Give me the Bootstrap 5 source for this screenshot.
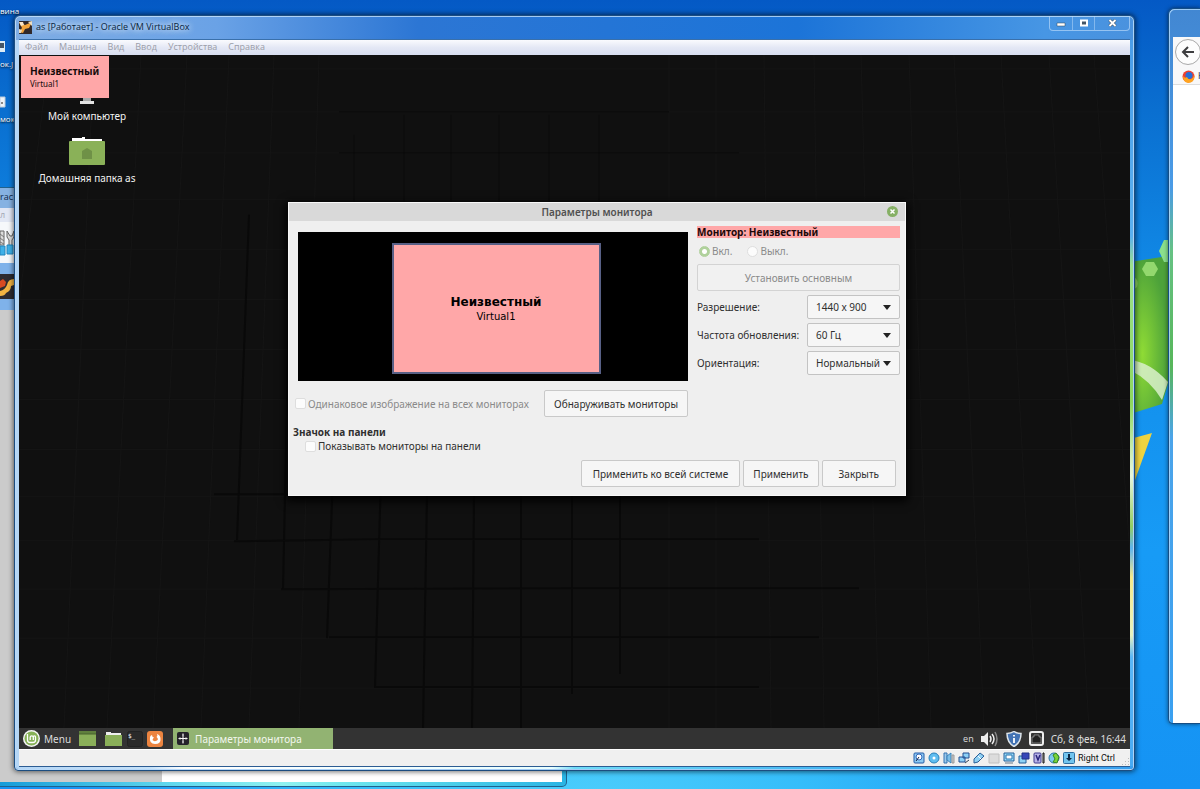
<!DOCTYPE html>
<html lang="ru">
<head>
<meta charset="utf-8">
<meta name="viewport" content="width=device-width, initial-scale=1">
<title>as [Работает] - Oracle VM VirtualBox</title>
<link rel="stylesheet" href="https://cdn.jsdelivr.net/npm/bootstrap@5.3.0/dist/css/bootstrap.min.css">
<style>
body{font-family:"Noto Sans",sans-serif;font-size:10px;line-height:14px;color:#303030;background:#1593f0}
.host{min-height:100vh;background:radial-gradient(ellipse 520px 300px at 48% 104%,#4fd0fc,#35bdfa 45%,transparent),linear-gradient(180deg,#0459c5 0,#0a6fd0 14%,#118be8 36%,#179bf6 70%,#1593f4 100%)}
.segoe{font-family:"Open Sans",sans-serif;font-size:9px}
.hosticon{left:0;color:#fff;font-size:8px;text-shadow:0 1px 2px #000;white-space:nowrap}
.vm{left:14px;right:65px;top:15px;bottom:18px;padding:0 4px 3px 4px;border:1px solid #1c4d80;border-radius:6px 6px 4px 4px;background:linear-gradient(90deg,#7fade4 0,#6aa2e6 18%,#2c76d4 36%,#1c74d8 70%,#4796e4 92%,#4a92de);box-shadow:0 0 5px 1px rgba(0,0,0,.55),inset 0 0 0 1px rgba(205,232,255,.75);z-index:3}
.vm-glass{left:1px;right:1px;top:24px;bottom:1px;border-radius:0 0 3px 3px;background:linear-gradient(90deg,#b4d6f6 0,#c6e2f9 12%,#fff 15%,#e9ffff 48%,#6fdcf8 50%,#3fb2f2 75%,#38a0ef)}
.vm-right{right:1px;width:3px;top:24px;bottom:4px;background:linear-gradient(180deg,#4a9de8 0,#5ab0ef 27%,#9be08d 31%,#8dd75d 50%,#e8f6dd 60%,#93cd62 67%,#5fb4ee 70%,#f6e98a 74%,#e7f2c0 82%,#5ab6f6 85%,#48aaf3)}
.vm-title{height:23px}
.vm-title h1{font-size:9px;line-height:14px;font-weight:400;color:#071f3c;text-shadow:0 0 6px #fff,0 0 6px #cfe4fa}
.caption{border:1px solid rgba(190,220,250,.65);border-top:0;border-radius:0 0 4px 4px;height:15px}
.caption button{border:0;background:none;padding:0;height:14px;width:22px;display:flex;align-items:center;justify-content:center}
.caption button+button{border-left:1px solid rgba(190,220,250,.5)}
.caption button:last-child{width:35px}
.menu{height:16px;background:linear-gradient(#fafbfe,#e4e8f5 50%,#d8def0);padding-left:6px;gap:11px;border-top:1px solid #3a70ab}
.menu a{color:#9a9da8;text-decoration:none;font-size:9px;line-height:14px}
.client{border-bottom:1px solid #2c5c93}
.guest{background:#101010;overflow:hidden}
.grid-art{inset:0;width:100%;height:100%}
.osd{left:2px;top:1px;width:88px;height:42px;padding:9px 9px;background:#ffa7a8;color:#140a0a;font-size:8px;line-height:11px;z-index:2}
.osd strong{display:block;font-size:10px;line-height:13px}
.desk{left:20px;top:41px;width:96px;color:#f2f2f2;text-align:center;white-space:nowrap}
.desk-folder{margin:10px 0 4px}
.dialog-win{left:269px;top:147px;width:618px;background:#efefef;border:1px solid #f8f8f8;box-shadow:0 3px 9px 2px #000}
.dialog-head{height:18px;background:#d9d9d9}
.dialog-head h2{font-size:10px;line-height:18px;font-weight:600;color:#505050}
.close-dot{right:7px;top:3px;width:11px;height:11px;border:0;padding:0;background:none;display:flex}
.dialog-body{padding:5px 5px 0 6px;gap:9px;white-space:nowrap}
.preview{height:149px;background:#000;margin:6px 0 9px 3px}
.screen{width:209px;height:131px;border:2px solid #586086;background:#ffa7a8;color:#000;font-family:"DejaVu Sans",sans-serif;font-size:10px;line-height:13px;margin:4px 0 0 6px}
.screen strong{font-size:12px;line-height:15px}
.mbtn{border:1px solid #c9c9c9;border-radius:2px;background:#f6f6f6;color:#303030;line-height:14px;height:27px;padding:0 9px;white-space:nowrap}
.mbtn-wide{padding:0 11px}
.mbtn-close{padding:0 16px}
.mbtn:disabled{background:#f1f1f1;color:#8a8a8a;opacity:1;border-color:#d3d3d3}
.msel{border:1px solid #c3c3c3;border-radius:2px;height:24px;width:93px;padding:0 8px;color:#303030;appearance:none;background:#f6f6f6 url("data:image/svg+xml,%3Csvg xmlns='http://www.w3.org/2000/svg' viewBox='0 0 8 5'%3E%3Cpath d='M0 0h8L4 5z' fill='%23222'/%3E%3C/svg%3E") no-repeat right 8px center/8px 5px}
.mon-name{background:#ffa7a8;color:#1a0808;line-height:12px;font-weight:700}
.radios{height:26px;gap:15px;padding-left:2px}
.opt{display:flex;align-items:center;gap:2px}
.tick{appearance:none;width:11px;height:11px;margin:0;border:1px solid #dedede;border-radius:2px;background:#fcfcfc;flex:none}
.tick[type=radio]{border-radius:50%}
.tick[type=radio]:checked{background:radial-gradient(#fff 0 2px,#b0d19c 3px);border-color:#b0d19c}
.dim{color:#8a8a8a}
.right-col{flex:0 0 203px}
.dialog-foot{gap:3px;padding:7px 9px 8px 0}
.taskbar{height:21px;background:#333;color:#ddd}
.taskbar button{background:none;border:0;padding:0;color:inherit;line-height:14px;display:flex;align-items:center}
.taskbar .task{background:#92b372;color:#f3f7ee;width:160px;height:21px;padding-left:4px;gap:6px;margin-left:10px}
.tray{gap:7px;padding-right:4px}
.status{height:17px;background:#f0f0f0;color:#111;font-family:Roboto,sans-serif;font-size:9px;gap:3px;border-top:1px solid #fff}
.back{left:0;width:567px;top:187px;bottom:2px;border:1px solid #21618c;border-left:0;border-radius:0 5px 5px 0;background:linear-gradient(90deg,#169cd8,#5fd8ee 30%,#8ff2f0 50%,#70e8ee 60%,#28b4e4 100%);padding:0 4px 4px 0;z-index:1;overflow:hidden}
.back-title{height:20px;background:#86b2e2;color:#10294a;line-height:17px}
.back-menu{height:14px;background:#e2e7f4;color:#a4a8b4}
.back-tool{height:41px;background:#f6f8fb}
.back-item{height:47px;background:#7fb2ea}
.pane-gray{width:162px;background:#cbcbcb}
.browser{right:0;width:32px;top:8px;height:calc(100% - 73px);border:1px solid #154e85;border-right:0;border-radius:6px 0 0 5px;background:linear-gradient(180deg,#4287d2,#4a9be6 25%,#66c283 34%,#57b65a 50%,#4ba4ea 60%,#3aa0f0);box-shadow:0 0 4px rgba(0,0,0,.55),inset 1px 1px 0 rgba(180,220,255,.8);padding:28px 0 4px 4px;z-index:2;overflow:hidden}
.browser-bar{height:48px;background:#f8f8f9;border-bottom:1px solid #ddd;overflow:hidden;padding:2px 0 0 2px}
.back-btn{width:26px;height:26px;border:1px solid #a8a8a8;border-radius:50%;background:#fdfdfd;padding:0;display:flex;align-items:center;justify-content:center;flex:none}
.bookmark{padding-left:7px;gap:3px}
.flag{right:0;top:230px;width:70px;height:310px}
svg{flex:none}
</style>
</head>
<body>
<div class="host position-relative overflow-hidden">

<svg class="flag position-absolute" viewBox="0 0 70 310">
<defs><radialGradient id="gr" cx=".3" cy=".62" r=".6"><stop offset="0" stop-color="#8fdb35"/><stop offset="1" stop-color="#4da23a"/></radialGradient></defs>
<path d="M0 32 L38 26 L42 30 V140 L32 174 L0 184Z" fill="url(#gr)"/>
<path d="M0 130Q20 132 38 152L32 170Q20 150 0 140Z" fill="#d9f0cb" opacity=".85"/>
<path d="M16 30l4-7h8l4 7-4 7h-8z" fill="#93d86e" transform="translate(-4 9)"/>
<path d="M29 21l5-11h8v22h-8z" fill="#8be08c"/>
<path d="M0 209L22 203L0 264Z" fill="#efd33f"/><path d="M4 47q5 3 3 10l-4 3z" fill="#8ad05f"/>
</svg>

<div class="segoe">
<span class="hosticon position-absolute" style="top:4px">вина</span>
<span class="hosticon position-absolute" style="top:57px">ок.J</span>
<span class="hosticon position-absolute" style="top:112px">мок</span>
<svg class="position-absolute start-0" style="top:40px" width="6" height="13"><path d="M0 1h5v11H0z" fill="#dcecf5"/><path d="M0 3h4v5H0z" fill="#456"/></svg>
<svg class="position-absolute start-0" style="top:96px" width="6" height="12"><path d="M0 1h5v10H0z" fill="#eef3f8" stroke="#bcd"/><path d="M1 6h2v2H1z" fill="#888"/></svg>
</div>

<section class="back position-absolute d-flex flex-column segoe">
<div class="back-title">rac</div>
<div class="back-menu">л</div>
<div class="back-tool"><svg width="15" height="38" viewBox="0 0 15 38"><path d="M0 9h4v14H0zM7 9l3 5h2l2-5v6l-2 3v6h-3v-6l-2-3z" fill="#ddd" stroke="#666"/><path d="M0 12l4 3M0 16l4 3M0 20l4 2" stroke="#777"/><path d="M0 24h5v9H0zM7 23h6v9H7z" fill="#3eb0e8" stroke="#2385bd"/></svg></div>
<div class="back-item d-flex align-items-center"><svg width="15" height="25" viewBox="0 0 15 25"><path d="M0 0h15v25H0z" fill="#2e2c31"/><path d="M14 5Q8 5 7 11Q5 16 0 17v5q5 0 6-3 5-2 5-7l3-1z" fill="#f2b443"/><path d="M0 7l3-2 3 3-1 4-5 2z" fill="#d84b22"/></svg></div>
<div class="d-flex flex-fill bg-white"><div class="pane-gray"></div></div>
</section>

<section class="browser position-absolute" aria-label="Firefox">
<div class="browser-bar">
<button class="back-btn" aria-label="Назад"><svg width="14" height="12" viewBox="0 0 14 12" fill="none" stroke="#3e3e40" stroke-width="2"><path d="M13 6H2M7 1L2 6l5 5"/></svg></button>
<div class="bookmark d-flex align-items-center mt-1 segoe text-dark"><svg width="13" height="13" viewBox="0 0 13 13"><circle cx="6.500" cy="6.500" r="6" fill="#ee3f31"/><circle cx="7" cy="5.500" r="3.500" fill="#276ed6"/><path d="M12 4q2 8-6 9-5-1-5-7 2 3 4 1 1 3 4 2 3-1 3-5z" fill="#ffa420"/></svg>Н</div>
</div>
<div class="bg-white h-100"></div>
</section>

<main class="vm position-absolute d-flex flex-column">
<div class="vm-glass position-absolute"></div><div class="vm-right position-absolute"></div>
<header class="vm-title d-flex align-items-start segoe position-relative">
<svg class="mt-1" width="13" height="14" viewBox="0 0 13 14"><path d="M0 1h13v13H0z" fill="#30282a"/><path d="M0 2l6 3 7-3-3 6-4 1-2 4-4-1 3-4z" fill="#f1a33b"/><path d="M0 2h4l1 3-3 1z" fill="#f7e5ca"/><path d="M9 2l4-1v5zM0 9l3 1-1 3H0z" fill="#eaddc4"/></svg>
<h1 class="mb-0 ms-1 mt-1">as [Работает] - Oracle VM VirtualBox</h1>
<div class="caption d-flex ms-auto">
<button aria-label="Свернуть"><svg width="10" height="8"><path d="M1 4h8v3H1z" fill="#fff" stroke="#345" stroke-width=".5"/></svg></button>
<button aria-label="Развернуть"><svg width="10" height="8"><path d="M2 1.500h6v5H2z" fill="#456" stroke="#fff" stroke-width="2"/></svg></button>
<button aria-label="Закрыть"><svg width="9" height="8"><path d="M1.500 1l6 6M7.500 1l-6 6" stroke="#345" stroke-width="3"/><path d="M1.500 1l6 6M7.500 1l-6 6" stroke="#fff" stroke-width="2"/></svg></button>
</div>
</header>
<div class="client d-flex flex-column flex-fill position-relative">
<nav class="menu d-flex segoe"><a href="#">Файл</a><a href="#">Машина</a><a href="#">Вид</a><a href="#">Ввод</a><a href="#">Устройства</a><a href="#">Справка</a></nav>

<div class="guest flex-fill position-relative">
<svg class="grid-art position-absolute" viewBox="0 0 1111 674" preserveAspectRatio="none" fill="none">
<g stroke="#151515"><path d="M30 0L0 250M75 0L45 674M122 0L88 674M168 0L134 674M210 0L182 674M255 0L230 674M300 0L280 674M650 0V674M697 0V674M745 0L752 674M795 0L805 674M842 0L860 674M890 0L912 674M935 0L965 674M982 0L1018 674M1030 0L1070 674M1075 0L1111 500"/><path d="M0 14H1111M0 57H1111M0 98H1111M0 145H1111M0 195H1111M0 245H1111M0 295H1111M0 345H1111M0 395H1111M0 442H1111M0 486H1111M0 535H1111M0 584H1111M0 634H1111"/></g>
<g stroke="#050505" stroke-width="2" opacity=".6"><path d="M230 160L218 486M272 160L264 535M314 420L308 584M362 420L356 634M408 440L404 674M455 440L453 674M502 440V674M553 440V640M601 440V620"/><path d="M215 487L360 485H740M262 535L560 534H840M310 583H800M356 633H740M195 440H269"/></g>
<g stroke="#0a0a0a"><path d="M335 80V147M385 60V147M432 60V147M480 60V147M530 60V147M580 60V147M320 98H720M320 57H650"/></g>
</svg>
<div class="osd position-absolute"><strong>Неизвестный</strong>Virtual1</div>
<div class="desk position-absolute d-flex flex-column align-items-center">
<svg width="16" height="9"><path d="M4 0h8v5H4z" fill="#aaa"/><path d="M1 5h14v3H1z" fill="#e4e4e4"/></svg>
<span class="mt-1">Мой компьютер</span>
<svg class="desk-folder" width="36" height="34" viewBox="0 0 36 34"><path d="M3 5h10V4h3v2h17v4H3z" fill="#fff"/><rect y="8" width="36" height="24" rx="1" fill="#8ab158"/><path d="M18 15l5 3v8H13v-8z" fill="#6f9147"/></svg>
<span>Домашняя папка as</span>
</div>

<section class="dialog-win position-absolute">
<header class="dialog-head position-relative text-center"><h2 class="mb-0">Параметры монитора</h2>
<button class="close-dot position-absolute" aria-label="Закрыть окно"><svg width="11" height="11" viewBox="0 0 11 11"><circle cx="5.500" cy="5.500" r="5.500" fill="#86b065"/><path d="M3.500 3.500l4 4m0-4l-4 4" stroke="#fff" stroke-width="1.500"/></svg></button></header>
<form class="dialog-body d-flex">
<div class="flex-fill">
<div class="preview d-flex align-items-center justify-content-center"><div class="screen d-flex flex-column align-items-center justify-content-center"><strong>Неизвестный</strong><span>Virtual1</span></div></div>
<div class="d-flex align-items-center justify-content-between"><label class="opt dim"><input class="tick" type="checkbox" disabled>Одинаковое изображение на всех мониторах</label><button type="button" class="mbtn">Обнаруживать мониторы</button></div>
</div>
<div class="right-col">
<div class="mon-name">Монитор: Неизвестный</div>
<div class="radios d-flex dim"><label class="opt"><input class="tick" type="radio" name="on" checked disabled>Вкл.</label><label class="opt"><input class="tick" type="radio" name="on" disabled>Выкл.</label></div>
<button type="button" class="mbtn w-100" disabled>Установить основным</button>
<div class="d-flex flex-column gap-1 mt-1">
<div class="d-flex align-items-center justify-content-between"><label for="res">Разрешение:</label><select id="res" class="msel"><option>1440 x 900</option></select></div>
<div class="d-flex align-items-center justify-content-between"><label for="hz">Частота обновления:</label><select id="hz" class="msel"><option>60 Гц</option></select></div>
<div class="d-flex align-items-center justify-content-between"><label for="rot">Ориентация:</label><select id="rot" class="msel"><option>Нормальный</option></select></div>
</div>
</div>
</form>
<div class="px-1 pt-2">
<strong class="d-block">Значок на панели</strong>
<label class="opt ps-2 ms-1"><input class="tick" type="checkbox">Показывать мониторы на панели</label>
</div>
<footer class="dialog-foot d-flex justify-content-end"><button class="mbtn mbtn-wide">Применить ко всей системе</button><button class="mbtn">Применить</button><button class="mbtn mbtn-close">Закрыть</button></footer>
</section>
</div>

<footer class="taskbar d-flex align-items-center">
<button class="ms-1 gap-1"><svg width="17" height="17" viewBox="0 0 17 17"><circle cx="8.500" cy="8.500" r="8.500" fill="#f5f5f5"/><circle cx="8.500" cy="8.500" r="7" fill="#87b158"/><path d="M4.500 4v6q0 2.500 2.500 2.500h3q2.500 0 2.500-2.500V7q0-1.200-1.100-1.200T10.300 7v3M10.300 7q0-1.200-1.500-1.200T7.200 7v3" fill="none" stroke="#fff" stroke-width="1.300"/></svg>Menu</button>
<button class="ms-2" aria-label="Рабочий стол"><svg width="17" height="15"><path d="M0 0h17v15H0z" fill="#8aaf59"/><path d="M0 0h17v3H0z" fill="#5f7f3d"/><path d="M0 3h17" stroke="#49632f"/></svg></button>
<button class="ms-2" aria-label="Файлы"><svg width="19" height="15"><path d="M2 3V1h5v1h10v3H2z" fill="#eee"/><path d="M1 4h17v11H1z" fill="#8aaf59"/></svg></button>
<button class="ms-1" aria-label="Терминал"><svg width="16" height="16"><rect x=".5" y=".5" width="15" height="15" rx="2" fill="#2a2a2a" stroke="#222"/><text x="1" y="7" font-family="DejaVu Sans Mono" font-size="6" fill="#fff">$_</text></svg></button>
<button class="ms-1" aria-label="Firefox"><svg width="16" height="16" viewBox="0 0 16 16"><rect width="16" height="16" rx="3" fill="#ed8440"/><path d="M3 6q-1 7 5 7t5.500-5q0-4-3.500-5 1 2-.5 3Q12 8 10 9.500 7 11 5.500 9 6 7 7 6.500 5 6 5 4 3.500 4.500 3 6z" fill="#fff"/></svg></button>
<button class="task"><svg width="12" height="13" viewBox="0 0 12 13"><rect width="12" height="13" rx="2" fill="#24222a"/><path d="M6 1.500v10M1.500 6.500h9" stroke="#fff"/><path d="M5 3h2M5 10h2M3 5v3M9 5v3" stroke="#ddd" stroke-width=".7"/></svg>Параметры монитора</button>
<div class="tray d-flex align-items-center ms-auto"><span class="segoe">en</span>
<svg width="18" height="16" viewBox="0 0 18 16" fill="none" stroke="#eee"><path d="M0 5h3l4-4v14l-4-4H0z" fill="#eee" stroke="none"/><path d="M9 5q2 3 0 6M11 3q4 5 0 10" stroke-width="1.500"/><path d="M14 1q4 7 0 14" stroke="#888" stroke-width="1.500"/></svg>
<svg width="16" height="16" viewBox="0 0 16 16"><path d="M8 .5q3 2 7 2 0 9-7 13-7-4-7-13 4 0 7-2z" fill="#4373b4" stroke="#dde4ea" stroke-width="1.500"/><path d="M8 7v5M8 4v1.500" stroke="#fff" stroke-width="1.800"/></svg>
<svg width="15" height="15" viewBox="0 0 15 15"><rect x="1" y="1" width="13" height="13" rx="2" fill="#333" stroke="#eee" stroke-width="2"/><path d="M3 12V6h2V4h5v2h2v6z" fill="#222" stroke="#bbb" stroke-width=".6"/></svg>
<span>Сб, 8 фев, 16:44</span></div>
</footer>

<footer class="status d-flex align-items-center justify-content-end">
<svg width="12" height="12"><rect x="1" y="1" width="10" height="10" rx="1" fill="#8cc9f2" stroke="#245ca8"/><circle cx="6" cy="5" r="3" fill="#fff" stroke="#36b"/><path d="M6 5L3 9" stroke="#124"/></svg>
<svg width="12" height="12"><circle cx="6" cy="6" r="5" fill="#5fbdf0" stroke="#2880bb"/><circle cx="6" cy="6" r="1.500" fill="#fff"/></svg>
<svg width="12" height="12"><path d="M1 1h3v10H1z" fill="#9cc9ea" stroke="#3272b2"/><path d="M4 4l4-3v10l-4-3z" fill="#7cbfe8" stroke="#3a84bd"/><path d="M9 3h2v8H9z" fill="#ccc" stroke="#999"/></svg>
<svg width="12" height="12"><path d="M5 1h6v5H5zM1 5h6v5H1z" fill="#8dd0f6" stroke="#234f91"/><path d="M7 11l4-3" stroke="#345"/></svg>
<svg width="12" height="12"><path d="M1 11V7l6-6 4 3-6 6z" fill="#8fd0f3" stroke="#2b6098"/><path d="M5 4l3 3" stroke="#fff"/></svg>
<svg width="12" height="12"><path d="M1 2h10v9H1z" fill="#dcdcdc" stroke="#c0c0c0"/></svg>
<svg width="12" height="12"><path d="M1 1h10v8H1z" fill="#9adcf8" stroke="#24609b"/><path d="M3 3h6v4H3z" fill="#fff" stroke="#2674b0"/><path d="M2 11h8" stroke="#678"/></svg>
<svg width="12" height="12"><path d="M1 4h7v7H1z" fill="#8fd2f5" stroke="#24609b"/><path d="M4 1h7v6H4z" fill="#3545b8" stroke="#223388"/></svg>
<svg width="12" height="12"><rect x="1" y="1" width="7" height="10" rx="1" fill="#b8b4e8" stroke="#3e3a8e"/><path d="M3 3l2 5 2-5" fill="none" stroke="#2b267c" stroke-width="1.500"/><path d="M10 1h1v10h-1z" fill="#fff" stroke="#111"/></svg>
<svg width="12" height="12"><circle cx="6" cy="6" r="5" fill="#7fc9ee" stroke="#2b76aa"/><path d="M5 3l3-2 3 4-2 6-4-1 2-3z" fill="#7bd43a" stroke="#348723"/></svg>
<svg width="12" height="12"><rect x=".5" y=".5" width="11" height="11" rx="1" fill="#72c4ee" stroke="#2e6fa3"/><path d="M5 2h2v4h2L6 9 3 6h2z" fill="#0b2744"/></svg>
<span>Right Ctrl</span>
<svg class="align-self-end ms-1" width="8" height="8" fill="#bbb"><path d="M6 0h1v1H6zM6 3h1v1H6zM3 3h1v1H3zM6 6h1v1H6zM3 6h1v1H3zM0 6h1v1H0z"/></svg>
</footer>
</div>
</main>
</div>
<script src="https://cdn.jsdelivr.net/npm/bootstrap@5.3.0/dist/js/bootstrap.bundle.min.js"></script>
</body>
</html>
